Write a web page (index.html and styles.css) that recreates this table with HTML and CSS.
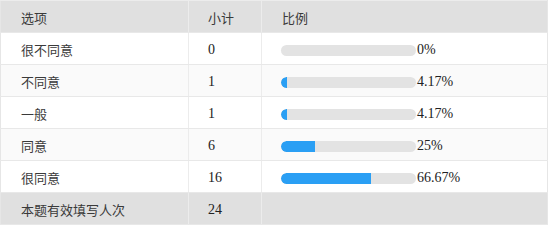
FILE: index.html
```html
<!DOCTYPE html>
<html lang="zh">
<head>
<meta charset="utf-8">
<link rel="stylesheet" href="styles.css">
</head>
<body>
<table class="stat">
  <thead>
    <tr><th class="c1">选项</th><th class="c2">小计</th><th class="c3">比例</th></tr>
  </thead>
  <tbody>
    <tr><td class="c1">很不同意</td><td class="num">0</td><td><div class="ratio"><span class="bar"><span class="fill" style="width:0%"></span></span><span class="pct">0%</span></div></td></tr>
    <tr class="alt"><td class="c1">不同意</td><td class="num">1</td><td><div class="ratio"><span class="bar"><span class="fill" style="width:4.17%"></span></span><span class="pct">4.17%</span></div></td></tr>
    <tr><td class="c1">一般</td><td class="num">1</td><td><div class="ratio"><span class="bar"><span class="fill" style="width:4.17%"></span></span><span class="pct">4.17%</span></div></td></tr>
    <tr class="alt"><td class="c1">同意</td><td class="num">6</td><td><div class="ratio"><span class="bar"><span class="fill" style="width:25%"></span></span><span class="pct">25%</span></div></td></tr>
    <tr><td class="c1">很同意</td><td class="num">16</td><td><div class="ratio"><span class="bar"><span class="fill" style="width:66.67%"></span></span><span class="pct">66.67%</span></div></td></tr>
  </tbody>
  <tfoot>
    <tr><td class="c1">本题有效填写人次</td><td class="num">24</td><td></td></tr>
  </tfoot>
</table>
</body>
</html>
```
FILE: styles.css
```css
html, body { margin: 0; padding: 0; background: #fff; }
.stat {
  border-collapse: collapse;
  width: 548px;
  table-layout: fixed;
  border: 1px solid #e6e6e6;
  border-top: 1px solid #ececec;
  font-family: "Noto Sans CJK SC", "Noto Sans", sans-serif;
  font-size: 13px;
  color: #3a3a3a;
}
.stat th, .stat td {
  padding: 0 0 0 20px;
  text-align: left;
  font-weight: normal;
  border-bottom: 1px solid #e8e8e8;
  border-right: 1px solid #ececec;
  vertical-align: middle;
  line-height: 16px;
}
.stat th { padding-top: 2px; height: 29px; }
.stat td { padding-top: 3px; height: 28px; }
.stat th:last-child, .stat td:last-child { border-right: none; }
.stat thead tr, .stat tfoot tr { background: #e0e0e0; }
.stat .c1 { width: 167px; }
.stat th.c2, .stat td.num { width: 53px; padding-left: 19px; }
.stat th.c3 { padding-left: 20px; }
.stat tbody td:nth-child(3) { padding-left: 19px; }
.stat tr.alt { background: #fafafa; }
.num {
  font-family: "Liberation Serif", "Times New Roman", serif;
  font-size: 14px;
  color: #222;
}
.ratio { display: flex; align-items: center; }
.bar {
  display: block;
  width: 135px;
  height: 11px;
  border-radius: 6px;
  background: #e3e3e3;
  overflow: hidden;
}
.fill { display: block; height: 100%; background: #2a9ff4; border-radius: 6px 0 0 6px; }
.pct {
  font-family: "Liberation Serif", "Times New Roman", serif;
  font-size: 14px;
  color: #222;
  margin-left: 1px;
}
```
